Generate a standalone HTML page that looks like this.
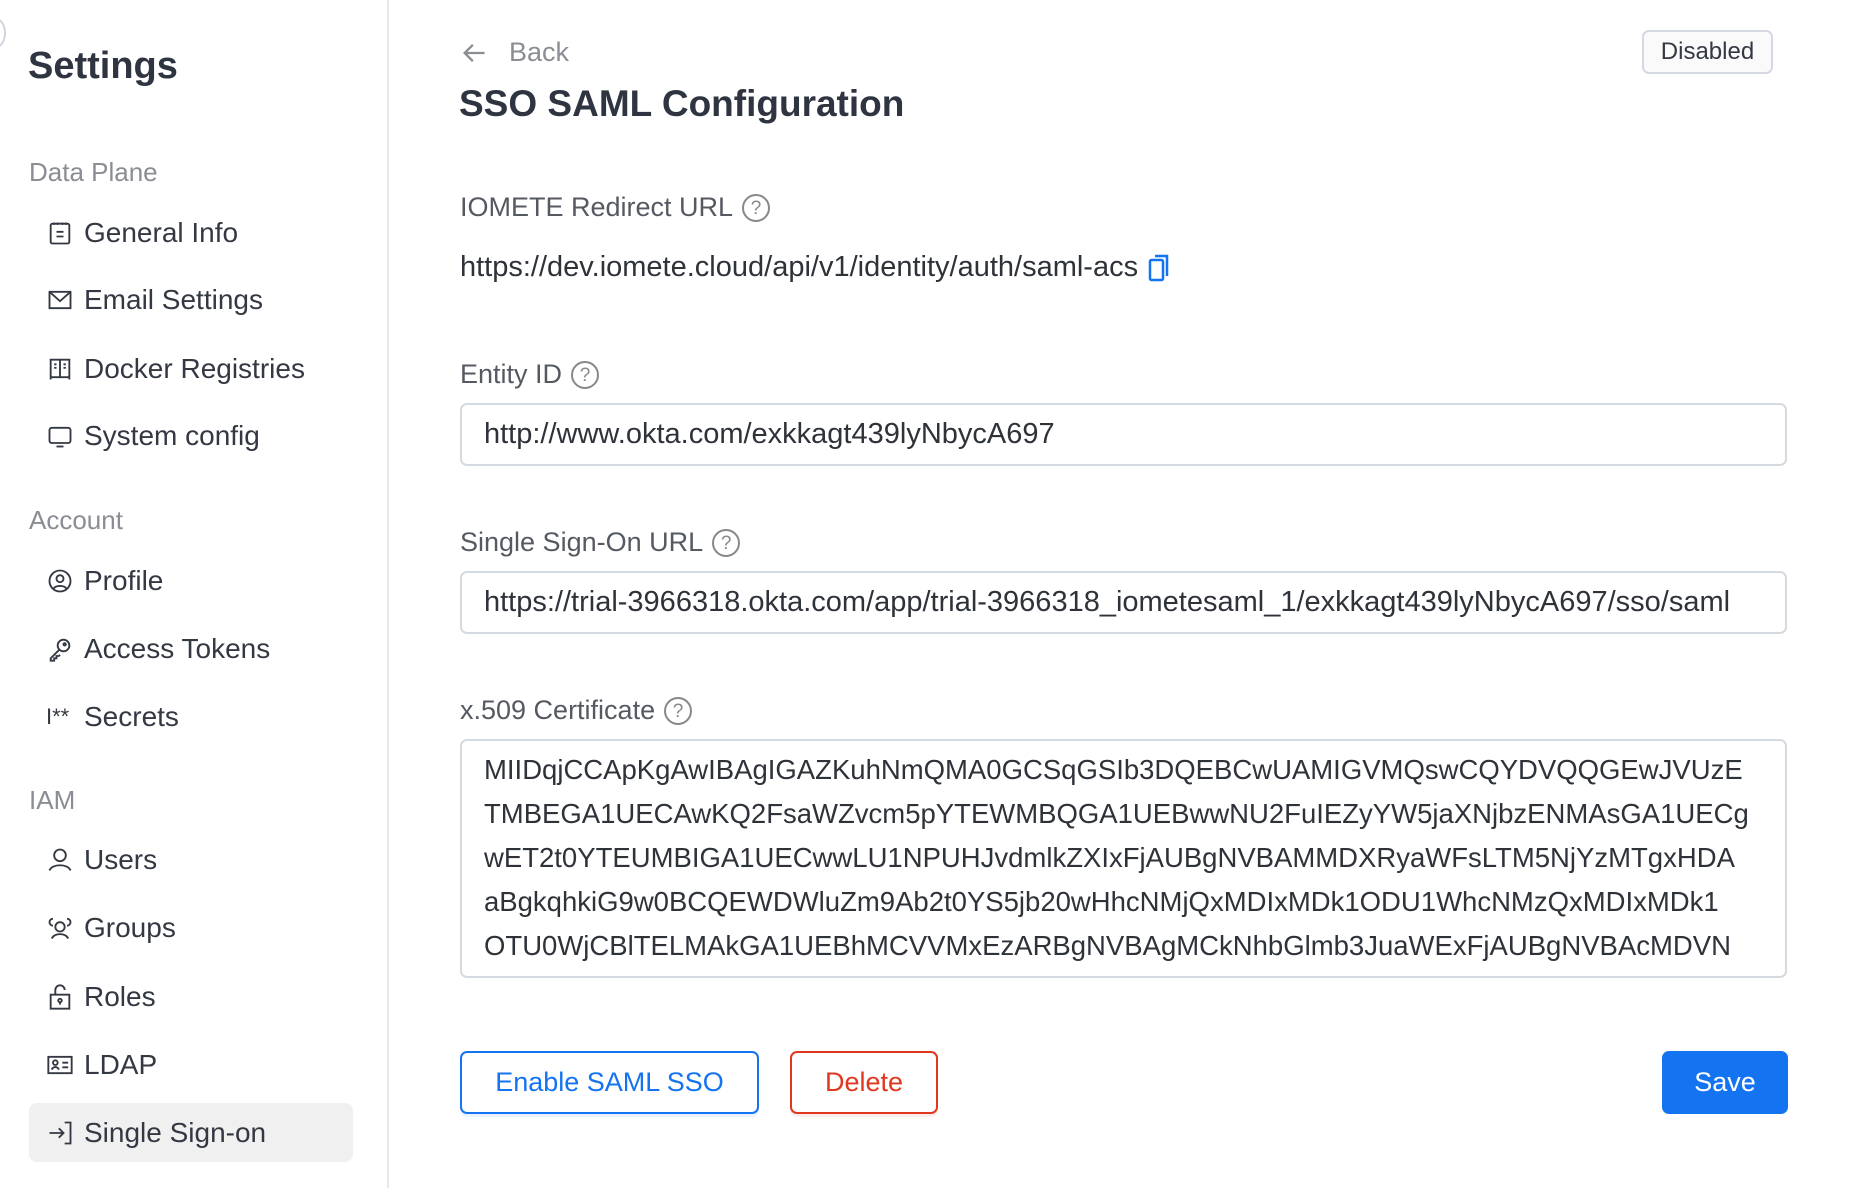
<!DOCTYPE html>
<html><head><meta charset="utf-8"><style>
*{margin:0;padding:0;box-sizing:border-box}
body{width:1858px;height:1188px;background:#fff;font-family:"Liberation Sans",sans-serif;color:#333842;position:relative;overflow:hidden}
.a{position:absolute;white-space:nowrap}
.side{position:absolute;left:0;top:0;width:389px;height:1188px;border-right:2px solid #e6e8ec}
.sec{font-size:26px;color:#8a8d93;left:29px}
.it{left:46px;font-size:28px;color:#333842;display:flex;align-items:center;height:40px}
.it svg{width:28px;height:28px;margin-right:10px;stroke:#333842;fill:none;stroke-width:1.6}
.lbl{font-size:27px;color:#555a62;left:460px;display:flex;align-items:center}
.q{display:inline-block;width:28px;height:28px;border:2px solid #888;border-radius:50%;font-size:19px;color:#888;text-align:center;line-height:25px;margin-left:9px}
.inp{position:absolute;left:460px;width:1327px;border:2px solid #d5d9e0;border-radius:7px;font-size:29px;color:#2e3239;padding-left:22px}
.btn{position:absolute;top:1051px;height:63px;border-radius:7px;font-size:27px;display:flex;align-items:center;justify-content:center}
</style></head><body>
<div class="side">
<div class="a" style="left:-14px;top:18px;width:20px;height:30px;border:2px solid #cfd4dd;border-radius:50%"></div>
<div class="a" style="left:28px;top:45px;font-size:38px;font-weight:bold;color:#2f3540">Settings</div>
<div class="a sec" style="top:157px">Data Plane</div>
<div class="a it" style="top:213px"><svg viewBox="0 0 24 24"><rect x="4" y="4" width="16" height="17" rx="1.5"/><path d="M7 3v2M10 3v2M14 3v2M17 3v2M9 11h6M9 15h6"/></svg>General Info</div>
<div class="a it" style="top:280px"><svg viewBox="0 0 24 24"><rect x="3" y="5" width="18" height="14"/><path d="M3 5l9 8 9-8"/></svg>Email Settings</div>
<div class="a it" style="top:349px"><svg viewBox="0 0 24 24"><path d="M4 21V4h16v17M12 4v15M4 19h16M7 8h2M7 11h2M15 8h2M15 11h2"/></svg>Docker Registries</div>
<div class="a it" style="top:416px"><svg viewBox="0 0 24 24"><rect x="3" y="5" width="18" height="13" rx="2"/><path d="M9 21h6"/></svg>System config</div>
<div class="a sec" style="top:505px">Account</div>
<div class="a it" style="top:561px"><svg viewBox="0 0 24 24"><circle cx="12" cy="12" r="9"/><circle cx="12" cy="10" r="3"/><path d="M6.5 18.5c2-3 9-3 11 0"/></svg>Profile</div>
<div class="a it" style="top:629px"><svg viewBox="0 0 24 24"><circle cx="15" cy="9" r="5"/><path d="M11 13l-7 7v2h3v-2h2v-2h2l1-1"/><circle cx="16" cy="8" r="1"/></svg>Access Tokens</div>
<div class="a it" style="top:697px"><span style="font-size:22px;margin-right:8px;width:30px">I**</span>Secrets</div>
<div class="a sec" style="top:785px">IAM</div>
<div class="a it" style="top:840px"><svg viewBox="0 0 24 24"><circle cx="12" cy="8" r="5"/><path d="M3 21c2-6 16-6 18 0"/></svg>Users</div>
<div class="a it" style="top:908px"><svg viewBox="0 0 24 24"><circle cx="12" cy="11" r="4"/><path d="M5 21c2-5 12-5 14 0M6 4a3 3 0 100 6M18 4a3 3 0 110 6"/></svg>Groups</div>
<div class="a it" style="top:977px"><svg viewBox="0 0 24 24"><rect x="4" y="10" width="16" height="12"/><path d="M8 10V6a4 4 0 018 0"/><circle cx="12" cy="15" r="1.5"/><path d="M12 16.5v2"/></svg>Roles</div>
<div class="a it" style="top:1045px"><svg viewBox="0 0 24 24"><rect x="2" y="5" width="20" height="14"/><circle cx="8" cy="10" r="2"/><path d="M5 16c1-3 5-3 6 0M14 10h5M14 14h5"/></svg>LDAP</div>
<div class="a" style="left:29px;top:1103px;width:324px;height:59px;background:#f0f0f0;border-radius:8px"></div>
<div class="a it" style="top:1113px"><svg viewBox="0 0 24 24"><path d="M3 12h12M11 8l4 4-4 4M16 3h5v18h-5"/></svg>Single Sign-on</div>
</div>

<div class="a" style="left:460px;top:37px;display:flex;align-items:center;font-size:27px;color:#8a8d93"><svg width="28" height="28" viewBox="0 0 24 24" fill="none" stroke="#8a8d93" stroke-width="2"><path d="M21 12H4M11 5l-7 7 7 7"/></svg><span style="margin-left:21px">Back</span></div>
<div class="a" style="left:459px;top:83px;font-size:37px;font-weight:bold;color:#2f3540">SSO SAML Configuration</div>
<div class="a" style="left:1642px;top:30px;width:131px;height:44px;border:2px solid #d3d8e2;border-radius:7px;background:#fafafa;font-size:24px;color:#333842;display:flex;align-items:center;justify-content:center">Disabled</div>

<div class="a lbl" style="top:192px">IOMETE Redirect URL<span class="q">?</span></div>
<div class="a" style="left:460px;top:251px;font-size:29px;color:#2e3239;display:flex;align-items:center">https://dev.iomete.cloud/api/v1/identity/auth/saml-acs<svg style="margin-left:10px" width="22" height="28" viewBox="0 0 22 28" fill="none" stroke="#1473f0" stroke-width="2.5"><path d="M7 2h12v20"/><rect x="2" y="6" width="13" height="20" rx="1.5"/></svg></div>

<div class="a lbl" style="top:359px">Entity ID<span class="q">?</span></div>
<div class="inp" style="top:403px;height:63px;line-height:59px">http://www.okta.com/exkkagt439lyNbycA697</div>

<div class="a lbl" style="top:527px">Single Sign-On URL<span class="q">?</span></div>
<div class="inp" style="top:571px;height:63px;line-height:59px">https://trial-3966318.okta.com/app/trial-3966318_iometesaml_1/exkkagt439lyNbycA697/sso/saml</div>

<div class="a lbl" style="top:695px">x.509 Certificate<span class="q">?</span></div>
<div class="inp" style="top:739px;height:239px;padding-top:7px;line-height:44px;font-size:27.5px">MIIDqjCCApKgAwIBAgIGAZKuhNmQMA0GCSqGSIb3DQEBCwUAMIGVMQswCQYDVQQGEwJVUzE<br>TMBEGA1UECAwKQ2FsaWZvcm5pYTEWMBQGA1UEBwwNU2FuIEZyYW5jaXNjbzENMAsGA1UECg<br>wET2t0YTEUMBIGA1UECwwLU1NPUHJvdmlkZXIxFjAUBgNVBAMMDXRyaWFsLTM5NjYzMTgxHDA<br>aBgkqhkiG9w0BCQEWDWluZm9Ab2t0YS5jb20wHhcNMjQxMDIxMDk1ODU1WhcNMzQxMDIxMDk1<br>OTU0WjCBlTELMAkGA1UEBhMCVVMxEzARBgNVBAgMCkNhbGlmb3JuaWExFjAUBgNVBAcMDVN</div>

<div class="btn" style="left:460px;width:299px;border:2px solid #1473f0;color:#1473f0;box-shadow:0 3px 0 #eaf3ff">Enable SAML SSO</div>
<div class="btn" style="left:790px;width:148px;border:2px solid #e0371f;color:#e0371f;box-shadow:0 3px 0 #fdeeee">Delete</div>
<div class="btn" style="left:1662px;width:126px;background:#1473f0;color:#fff">Save</div>
</body></html>
